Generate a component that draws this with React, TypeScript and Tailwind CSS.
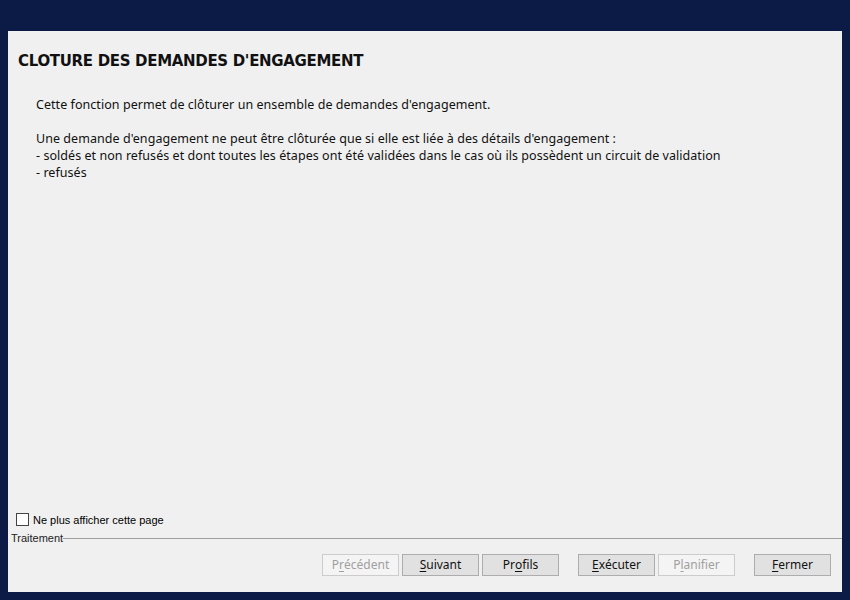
import React from "react";

const uiFont = { fontFamily: '"Noto Sans", "Open Sans", sans-serif' };
const oldFont = { fontFamily: '"Liberation Sans", Arial, sans-serif' };

function WinButton({
  pre,
  key_,
  post,
  disabled,
  className = "",
}: {
  pre: string;
  key_: string;
  post: string;
  disabled?: boolean;
  className?: string;
}) {
  return (
    <button
      disabled={disabled}
      style={uiFont}
      className={
        "flex h-[22px] w-[77px] items-center justify-center border text-[12px] leading-none " +
        (disabled
          ? "border-[#cccccc] bg-[#f4f4f4] text-[#a0a0a0]"
          : "border-[#adadad] bg-[#e1e1e1] text-[#111]") +
        " " +
        className
      }
    >
      {pre}
      <span className="underline underline-offset-2">{key_}</span>
      {post}
    </button>
  );
}

export default function App() {
  return (
    <div className="flex h-[600px] w-[850px] flex-col bg-[#0b1b45] pb-[8px] pl-[8px] pr-[8px] pt-[31px]">
      <div className="flex flex-1 flex-col bg-[#f0f0f0]">
        <div className="flex-1 pl-[10px] pt-[21px]">
          <h1
            style={{ fontFamily: '"DejaVu Sans", Verdana, sans-serif' }}
            className="text-[15px] font-bold leading-[18px] tracking-[-0.32px] text-[#111]"
          >
            CLOTURE DES DEMANDES D'ENGAGEMENT
          </h1>
          <div style={uiFont} className="mt-[26px] pl-[18px] text-[12.5px] leading-[17px] tracking-[0.05px] text-[#111]">
            <p>Cette fonction permet de clôturer un ensemble de demandes d'engagement.</p>
            <p className="mt-[17px]">
              Une demande d'engagement ne peut être clôturée que si elle est liée à des détails d'engagement :
            </p>
            <p>- soldés et non refusés et dont toutes les étapes ont été validées dans le cas où ils possèdent un circuit de validation</p>
            <p>- refusés</p>
          </div>
        </div>

        <label style={oldFont} className="flex items-center gap-[4px] pl-[8px] text-[11px] text-black">
          <span className="h-[13px] w-[13px] border border-[#444] bg-white" />
          Ne plus afficher cette page
        </label>

        <div style={oldFont} className="mt-[4px] flex items-center pl-[3px] text-[11px] leading-[13px] text-[#222]">
          <span>Traitement</span>
          <div className="h-px flex-1 border-t border-[#a0a0a0]" />
        </div>

        <div className="mb-[16px] mt-[9px] flex justify-end pr-[11px]">
          <WinButton pre="P" key_="r" post="écédent" disabled />
          <WinButton pre="" key_="S" post="uivant" className="ml-[3px]" />
          <WinButton pre="Pr" key_="o" post="fils" className="ml-[3px]" />
          <WinButton pre="" key_="E" post="xécuter" className="ml-[19px]" />
          <WinButton pre="P" key_="l" post="anifier" disabled className="ml-[3px]" />
          <WinButton pre="" key_="F" post="ermer" className="ml-[19px]" />
        </div>
      </div>
    </div>
  );
}
